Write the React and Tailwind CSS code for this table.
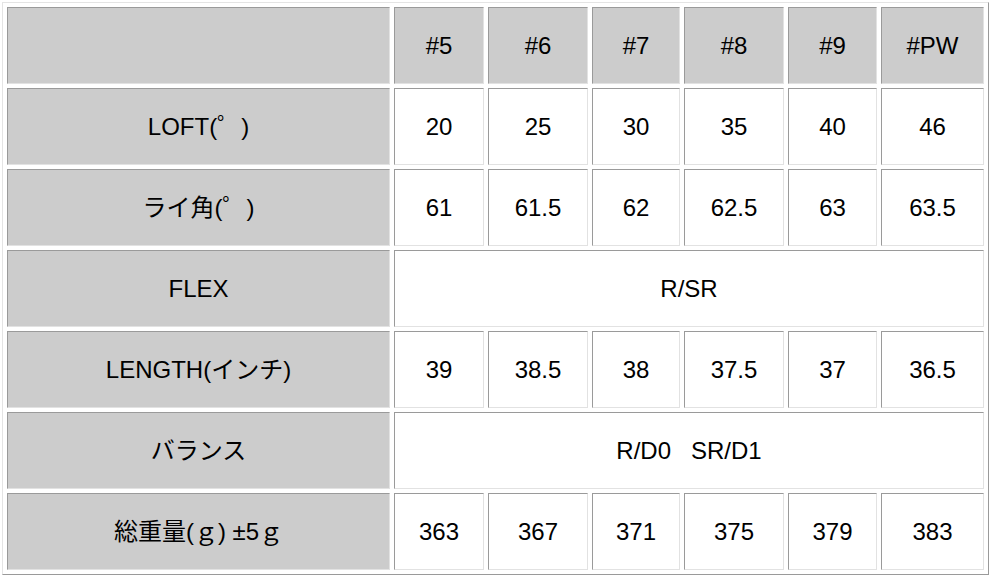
import React from "react";

const heads = ["#5", "#6", "#7", "#8", "#9", "#PW"];
const widths = ["w-[383px]", "w-[90px]", "w-[100px]", "w-[88px]", "w-[100px]", "w-[89px]", "w-[103px]"];

const rows = [
  { label: "LOFT(゜)", vals: ["20", "25", "30", "35", "40", "46"] },
  { label: "ライ角(゜)", vals: ["61", "61.5", "62", "62.5", "63", "63.5"] },
  { label: "FLEX", span: "R/SR" },
  { label: "LENGTH(インチ)", vals: ["39", "38.5", "38", "37.5", "37", "36.5"] },
  { label: "バランス", span: "R/D0\u00a0\u00a0\u00a0SR/D1" },
  { label: "総重量(ｇ) ±5ｇ", vals: ["363", "367", "371", "375", "379", "383"] },
];

const cell =
  "border border-t-[#9a9a9a] border-l-[#9a9a9a] border-b-[#e2e2e2] border-r-[#e2e2e2] text-center align-middle p-0";

export default function App() {
  return (
    <div className="w-[991px] h-[577px] bg-white overflow-hidden pt-[2px] pl-[2px]">
      <table
        className="table-fixed border-separate border-spacing-[4px] w-[987px] border border-t-[#e4e4e4] border-l-[#e4e4e4] border-b-[#9a9a9a] border-r-[#9a9a9a] text-black text-[24px] leading-none"
        style={{ fontFamily: '"Liberation Sans", Arial, "Noto Sans CJK JP", sans-serif' }}
      >
        <tbody>
          <tr className="h-[77px]">
            <td className={`${cell} ${widths[0]} bg-[#cccccc]`}></td>
            {heads.map((h, i) => (
              <td key={h} className={`${cell} ${widths[i + 1]} bg-[#cccccc]`}>
                {h}
              </td>
            ))}
          </tr>
          {rows.map((r) => (
            <tr key={r.label} className="h-[77px]">
              <td className={`${cell} bg-[#cccccc]`}>{r.label}</td>
              {r.span ? (
                <td colSpan={6} className={`${cell} bg-white`}>
                  {r.span}
                </td>
              ) : (
                r.vals.map((v, i) => (
                  <td key={i} className={`${cell} bg-white`}>
                    {v}
                  </td>
                ))
              )}
            </tr>
          ))}
        </tbody>
      </table>
    </div>
  );
}
